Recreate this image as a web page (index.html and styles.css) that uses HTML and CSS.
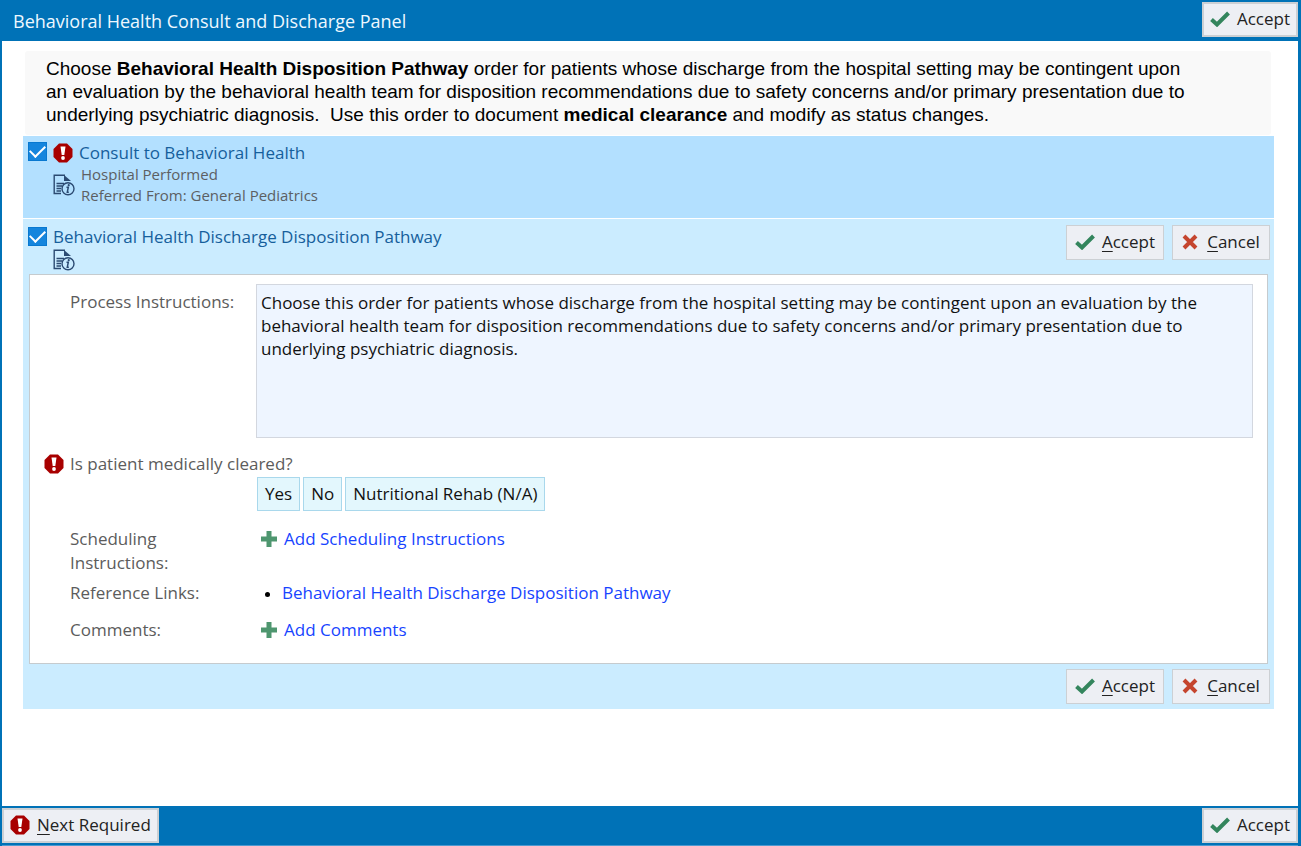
FILE: index.html
```html
<!DOCTYPE html>
<html lang="en">
<head>
<meta charset="utf-8">
<title>Behavioral Health Consult and Discharge Panel</title>
<link rel="stylesheet" href="styles.css">
</head>
<body>
<svg class="sprite" aria-hidden="true">
  <symbol id="check" viewBox="0 0 20 16"><path d="M1.500 8.500 7 13.500 18.500 2" fill="none" stroke="#33855d" stroke-width="4"/></symbol>
  <symbol id="cross" viewBox="0 0 16 16"><path d="M2 2 14 14M14 2 2 14" fill="none" stroke="#c5452e" stroke-width="4"/></symbol>
  <symbol id="plus" viewBox="0 0 16 16"><path d="M5.500 0h5v5.500H16v5h-5.500V16h-5v-5.500H0v-5h5.500z" fill="#4e966f"/></symbol>
  <symbol id="alert" viewBox="0 0 20 20"><path d="M6 .5h8L19.500 6v8L14 19.500H6L.5 14V6z" fill="#a80000"/><path d="M7.500 3.500h5l-1.200 8.500H8.700z" fill="#fff"/><circle cx="10" cy="15" r="1.900" fill="#fff"/></symbol>
  <symbol id="report" viewBox="0 0 22 22"><g fill="none" stroke="#2b4a72" stroke-width="1.400"><path d="M8 19.500H1.200V1.200H12"/><path d="M3.500 9.500H11M3.500 12H9M3.500 14.500H8M3.500 17H8"/><circle cx="15" cy="14.800" r="6"/></g><path d="M11 1 18 7H11z" fill="#2b4a72"/><path d="M13.500 13.200h1.800l-1 5h1.500" fill="none" stroke="#2b4a72" stroke-width="1.500"/><circle cx="15.700" cy="11.200" r="1.100" fill="#2b4a72"/></symbol>
</svg>
<div class="window">
  <header class="bar">
    <h1 class="title">Behavioral Health Consult and Discharge Panel</h1>
    <button class="button"><svg class="check"><use href="#check"/></svg><span>Accept</span></button>
  </header>
  <main class="content">
    <p class="notice">Choose <b>Behavioral Health Disposition Pathway</b> order for patients whose discharge from the hospital setting may be contingent upon<br>an evaluation by the behavioral health team for disposition recommendations due to safety concerns and/or primary presentation due to<br>underlying psychiatric diagnosis.&nbsp; Use this order to document <b>medical clearance</b> and modify as status changes.</p>
    <section class="order">
      <input class="tick" type="checkbox" id="consult" checked>
      <div class="order-body">
        <div class="order-head"><svg class="alert"><use href="#alert"/></svg><label class="order-name" for="consult">Consult to Behavioral Health</label></div>
        <div class="order-info"><svg class="report"><use href="#report"/></svg>
          <div><div>Hospital Performed</div><div>Referred From: General Pediatrics</div></div>
        </div>
      </div>
    </section>
    <section class="order-open">
      <div class="order-top">
        <input class="tick" type="checkbox" id="pathway" checked>
        <div class="order-body">
          <label class="order-name" for="pathway">Behavioral Health Discharge Disposition Pathway</label>
          <svg class="report"><use href="#report"/></svg>
        </div>
        <div class="actions">
          <button class="button"><svg class="check"><use href="#check"/></svg><span><u>A</u>ccept</span></button>
          <button class="button"><svg class="cross"><use href="#cross"/></svg><span><u>C</u>ancel</span></button>
        </div>
      </div>
      <div class="form">
        <div class="row">
          <label class="label" for="instructions">Process Instructions:</label>
          <textarea class="instructions" id="instructions" readonly>Choose this order for patients whose discharge from the hospital setting may be contingent upon an evaluation by the behavioral health team for disposition recommendations due to safety concerns and/or primary presentation due to underlying psychiatric diagnosis.</textarea>
        </div>
        <div class="question" id="cleared"><svg class="alert"><use href="#alert"/></svg><span>Is patient medically cleared?</span></div>
        <div class="choices" role="group" aria-labelledby="cleared">
          <button class="choice">Yes</button><button class="choice">No</button><button class="choice">Nutritional Rehab (N/A)</button>
        </div>
        <div class="row"><div class="label narrow">Scheduling Instructions:</div><a class="link" href="#"><svg class="plus"><use href="#plus"/></svg>Add Scheduling Instructions</a></div>
        <div class="row references"><div class="label">Reference Links:</div><ul class="links"><li><a class="link" href="#">Behavioral Health Discharge Disposition Pathway</a></li></ul></div>
        <div class="row"><div class="label">Comments:</div><a class="link" href="#"><svg class="plus"><use href="#plus"/></svg>Add Comments</a></div>
      </div>
      <div class="actions bottom">
        <button class="button"><svg class="check"><use href="#check"/></svg><span><u>A</u>ccept</span></button>
        <button class="button"><svg class="cross"><use href="#cross"/></svg><span><u>C</u>ancel</span></button>
      </div>
    </section>
  </main>
  <footer class="bar foot">
    <button class="button"><svg class="alert"><use href="#alert"/></svg><span><u>N</u>ext Required</span></button>
    <button class="button"><svg class="check"><use href="#check"/></svg><span>Accept</span></button>
  </footer>
</div>
</body>
</html>
```
FILE: styles.css
```css
* { box-sizing: border-box; }
body { margin: 0; font: 17px/24px "Open Sans", "Noto Sans", sans-serif; color: #111; background: #fff; }
button, textarea { font: inherit; color: inherit; }
svg { flex: none; }
.sprite { position: absolute; width: 0; height: 0; }
.window { min-height: 100vh; display: flex; flex-direction: column; border-style: solid; border-color: #0072b7; border-width: 0 3px 0 2px; }
.bar { display: flex; justify-content: space-between; align-items: flex-start; height: 41px; padding-top: 2px; background: #0072b7; }
.foot { height: 40px; border-bottom: 1px solid #4e9ad0; }
.title { margin: 0; padding: 7px 0 0 11px; font-size: 18px; font-weight: 400; color: #eef8ff; }
.button { display: inline-flex; align-items: center; justify-content: center; gap: 7px; height: 35px; padding: 0 6px 2px; border: 2px solid #ccd0d4; background: #edeff4; color: #222; white-space: nowrap; }
.actions .button { min-width: 98px; border-width: 1px; }
.button u { text-underline-offset: 3px; }
.check { width: 20px; height: 16px; }
.cross { width: 16px; height: 16px; margin-right: 2px; }
.plus { width: 16px; height: 16px; }
.alert { width: 20px; height: 20px; }
.report { display: block; width: 22px; height: 22px; }
.content { flex: 1; padding: 10px 24px 0 21px; }
.notice { margin: 0 3px 1px 2px; padding: 6px 21px 9px; background: #f9f9f9; border-radius: 3px; font: 19px/23px "Liberation Sans", Arial, sans-serif; color: #000; }
.order { display: flex; gap: 6px; height: 82px; padding: 6px 5px; background: #b3e0ff; }
.tick { appearance: none; flex: none; display: grid; place-items: center; width: 19px; height: 19px; margin: 0; border: 1px solid #0878d0; background: #1585dd; }
.tick:checked::before { content: ""; width: 13px; height: 7px; border: solid #fff; border-width: 0 0 2px 2px; transform: translateY(-2px) rotate(-45deg); }
.order-name { display: block; color: #165f9c; }
.order-head { display: flex; align-items: center; gap: 6px; height: 22px; }
.order-info { display: flex; align-items: center; gap: 6px; color: #5c5f63; font-size: 15px; line-height: 21px; }
.order-open { margin-top: 1px; padding: 0 6px 5px; background: #cbecff; }
.order-top { display: flex; gap: 6px; height: 55px; margin: 0 -2px 0 -1px; padding-top: 6px; }
.order-top .tick { margin-top: 2px; }
.actions { display: flex; gap: 8px; margin-left: auto; }
.actions.bottom { justify-content: flex-end; margin-right: -2px; padding-top: 5px; }
.form { padding: 9px 14px 21px; border: 1px solid #c6cbce; background: #fff; }
.row { display: flex; }
.label { flex: none; width: 212px; padding: 6px 0 0 26px; color: #5c5c5c; }
.instructions { flex: 1; height: 154px; padding: 6px 4px; border: 1px solid #d3d7df; background: #eef5ff; line-height: 23px; resize: none; outline: 0; }
.question { display: flex; align-items: center; gap: 6px; margin-top: 14px; color: #5c5c5c; }
.choices { display: flex; gap: 3px; margin: 1px 0 10px 213px; }
.choice { height: 34px; padding: 0 7px; border: 1px solid #a9d8ec; background: #e3f7fd; }
.link { display: flex; align-items: center; gap: 7px; height: 24px; margin: 6px 0 0 5px; color: #1744ff; text-decoration: none; }
.narrow { padding-right: 60px; }
.references { margin-bottom: 7px; }
.links { margin: 0; padding: 0 0 0 26px; color: #000; }
.links li::marker { font-size: 15px; }
.links .link { margin-left: 0; }
```
